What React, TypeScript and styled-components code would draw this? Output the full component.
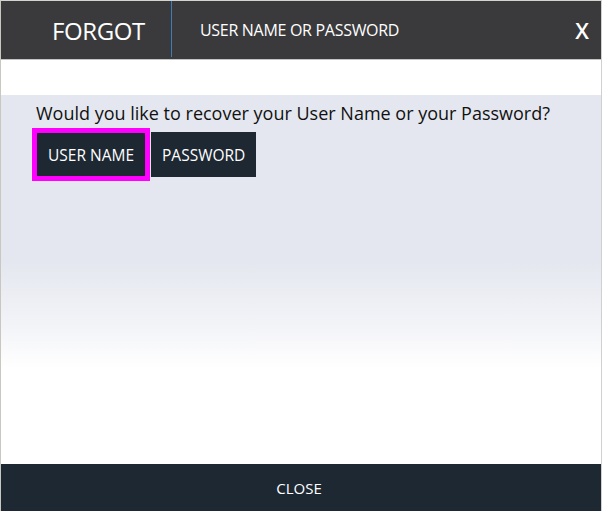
import React from "react";
import styled, { createGlobalStyle } from "styled-components";

const Global = createGlobalStyle`
  html, body { margin: 0; padding: 0; background: #ffffff; }
  body { font-family: "Open Sans", "Noto Sans", "Liberation Sans", sans-serif; }
  * { box-sizing: border-box; }
`;

const Dialog = styled.div`
  width: 602px;
  height: 511px;
  display: flex;
  flex-direction: column;
  border-top: 1px solid #d4d4ce;
  border-left: 1px solid #c8c8c0;
  border-right: 1px solid #d0d0d0;
  background: #ffffff;
  overflow: hidden;
`;

const Header = styled.header`
  height: 59px;
  flex: none;
  display: flex;
  align-items: flex-start;
  background: #3a3a3c;
  border-bottom: 1px solid #c4c4c4;
  color: #ffffff;
`;

const Brand = styled.div`
  width: 170px;
  height: 58px;
  display: flex;
  align-items: center;
  padding-left: 51px;
  font-size: 24px;
  letter-spacing: -0.4px;
`;

const Divider = styled.div`
  width: 1px;
  height: 56px;
  background: #3d7db6;
`;

const Title = styled.div`
  flex: 1;
  height: 58px;
  display: flex;
  align-items: center;
  padding-left: 28px;
  font-size: 16px;
  letter-spacing: -0.3px;
`;

const CloseX = styled.button`
  height: 58px;
  width: 42px;
  border: 0;
  background: transparent;
  color: #ffffff;
  font-family: "Open Sans", "Noto Sans", sans-serif;
  font-size: 22px;
  font-weight: 600;
  padding: 0 12px 0 0;
  text-align: right;
  cursor: pointer;
`;

const Spacer = styled.div`
  height: 35px;
  flex: none;
  background: #ffffff;
`;

const Content = styled.main`
  flex: 1;
  padding: 7px 0 0 35px;
  background: linear-gradient(
    to bottom,
    #e4e7ef 0%,
    #e4e7ef 45%,
    #f3f4f8 63%,
    #ffffff 74%,
    #ffffff 100%
  );
`;

const Question = styled.p`
  margin: 0;
  font-size: 18px;
  line-height: 22px;
  color: #111111;
  letter-spacing: 0;
`;

const ButtonRow = styled.div`
  display: flex;
  gap: 5px;
  margin-top: 8px;
`;

const ChoiceButton = styled.button<{ $active?: boolean }>`
  height: 45px;
  padding: 0 ${(p) => (p.$active ? 11 : 10)}px;
  border: 1px solid ${(p) => (p.$active ? "#ff00ff" : "#1e2833")};
  outline: ${(p) => (p.$active ? "4px solid #ff00ff" : "none")};
  background: #1e2833;
  color: #ffffff;
  font-family: "Open Sans", "Noto Sans", sans-serif;
  font-size: 15.5px;
  letter-spacing: 0;
  cursor: pointer;
`;

const Footer = styled.footer`
  height: 47px;
  flex: none;
  display: flex;
  align-items: center;
  justify-content: center;
  background: #1e2833;
  color: #ffffff;
  font-size: 15px;
  padding-right: 4px;
`;

export default function App() {
  return (
    <>
      <Global />
      <Dialog>
        <Header>
          <Brand>FORGOT</Brand>
          <Divider />
          <Title>USER NAME OR PASSWORD</Title>
          <CloseX aria-label="Close">X</CloseX>
        </Header>
        <Spacer />
        <Content>
          <Question>Would you like to recover your User Name or your Password?</Question>
          <ButtonRow>
            <ChoiceButton $active>USER NAME</ChoiceButton>
            <ChoiceButton>PASSWORD</ChoiceButton>
          </ButtonRow>
        </Content>
        <Footer>CLOSE</Footer>
      </Dialog>
    </>
  );
}
